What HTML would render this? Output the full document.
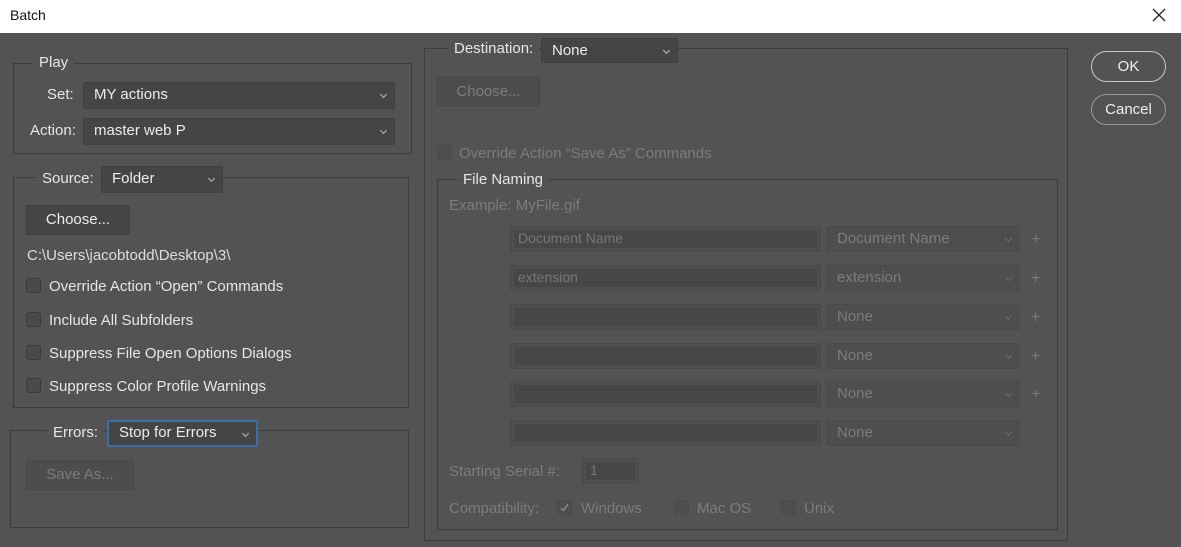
<!DOCTYPE html>
<html><head><meta charset="utf-8"><style>
*{box-sizing:border-box;margin:0;padding:0}
body{width:1181px;height:547px;background:#535353;font-family:"Liberation Sans",sans-serif;font-size:15px;color:#e6e6e6;position:relative;overflow:hidden}
.a{position:absolute;white-space:nowrap}
.title{left:0;top:0;width:1181px;height:33px;background:#fff;color:#111;font-size:14px}
.grp{position:absolute;border:1px solid #3c3c3c}
.leg{position:absolute;background:#535353;padding:0 6px;line-height:18px}
.dd{position:absolute;background:#454545;border:1px solid #3f3f3f;border-radius:2px;padding-left:10px;line-height:24px;color:#ececec}
.dd:after{content:"";position:absolute;right:8px;top:9px;width:4px;height:4px;border-right:1px solid #bbb;border-bottom:1px solid #bbb;transform:rotate(45deg)}
.btn{position:absolute;background:#454545;border:1px solid #3e3e3e;border-radius:2px;text-align:center;color:#eee}
.dis{color:#7c7c7c}
.btn.dis{background:#4d4d4d;border-color:#484848}
.cb{position:absolute;width:15px;height:15px;border:1px solid #3a3a3a;background:#4a4a4a;border-radius:3px}
.cb.d{background:#4e4e4e;border-color:#4a4a4a}
.tf{position:absolute;background:#4e4e4e;border:1px solid #4a4a4a;padding:3px}
.tf div{background:#474747;height:100%;color:#777;line-height:17px;padding-left:4px;font-size:14px}
.dd.d{background:#4e4e4e;border-color:#4a4a4a;color:#7c7c7c}
.dd.d:after{border-color:#6e6e6e}
.plus{position:absolute;color:#7a7a7a;font-size:16px}
.pill{position:absolute;border:1px solid #c8c8c8;border-radius:16px;text-align:center;color:#eee}
</style></head><body>
<div class="a title"><span class="a" style="left:10px;top:7px">Batch</span>
<svg class="a" style="left:1152px;top:8px" width="14" height="14"><path d="M1 1L13 13M13 1L1 13" stroke="#222" stroke-width="1.3"/></svg></div>

<div class="grp" style="left:13px;top:63px;width:399px;height:91px"></div>
<div class="leg a" style="left:33px;top:54px">Play</div>
<div class="a" style="left:47px;top:86px">Set:</div>
<div class="dd" style="left:83px;top:82px;width:312px;height:27px">MY actions</div>
<div class="a" style="left:30px;top:122px">Action:</div>
<div class="dd" style="left:83px;top:118px;width:312px;height:27px">master web P</div>

<div class="grp" style="left:13px;top:177px;width:396px;height:231px"></div>
<div class="leg a" style="left:36px;top:170px">Source:</div>
<div class="dd" style="left:101px;top:166px;width:122px;height:27px">Folder</div>
<div class="btn" style="left:26px;top:205px;width:104px;height:30px;line-height:28px">Choose...</div>
<div class="a" style="left:27px;top:247px;color:#ddd">C:\Users\jacobtodd\Desktop\3\</div>
<div class="cb" style="left:26px;top:278px"></div><div class="a" style="left:49px;top:278px">Override Action “Open” Commands</div>
<div class="cb" style="left:26px;top:312px"></div><div class="a" style="left:49px;top:312px">Include All Subfolders</div>
<div class="cb" style="left:26px;top:345px"></div><div class="a" style="left:49px;top:345px">Suppress File Open Options Dialogs</div>
<div class="cb" style="left:26px;top:378px"></div><div class="a" style="left:49px;top:378px">Suppress Color Profile Warnings</div>

<div class="grp" style="left:10px;top:430px;width:399px;height:98px"></div>
<div class="leg a" style="left:47px;top:424px">Errors:</div>
<div class="dd" style="left:107px;top:420px;width:151px;height:27px;border:2px solid #3b6ea8;line-height:22px">Stop for Errors</div>
<div class="btn dis" style="left:26px;top:460px;width:108px;height:30px;line-height:28px">Save As...</div>

<div class="grp" style="left:424px;top:48px;width:644px;height:493px"></div>
<div class="leg a" style="left:448px;top:40px">Destination:</div>
<div class="dd" style="left:541px;top:38px;width:137px;height:25px;line-height:23px">None</div>
<div class="btn dis" style="left:437px;top:77px;width:103px;height:29px;line-height:27px">Choose...</div>
<div class="cb d" style="left:437px;top:145px"></div><div class="a dis" style="left:459px;top:145px">Override Action “Save As” Commands</div>

<div class="grp" style="left:437px;top:179px;width:621px;height:351px"></div>
<div class="leg a" style="left:457px;top:171px">File Naming</div>
<div class="a dis" style="left:449px;top:197px">Example: MyFile.gif</div>

<div class="tf" style="left:510px;top:226px;width:311px;height:26px"><div>Document Name</div></div>
<div class="dd d" style="left:826px;top:226px;width:194px;height:26px">Document Name</div><div class="plus" style="left:1031px;top:231px">+</div>
<div class="tf" style="left:510px;top:265px;width:311px;height:26px"><div>extension</div></div>
<div class="dd d" style="left:826px;top:265px;width:194px;height:26px">extension</div><div class="plus" style="left:1031px;top:270px">+</div>
<div class="tf" style="left:510px;top:304px;width:311px;height:26px"><div></div></div>
<div class="dd d" style="left:826px;top:304px;width:194px;height:26px">None</div><div class="plus" style="left:1031px;top:309px">+</div>
<div class="tf" style="left:510px;top:343px;width:311px;height:26px"><div></div></div>
<div class="dd d" style="left:826px;top:343px;width:194px;height:26px">None</div><div class="plus" style="left:1031px;top:348px">+</div>
<div class="tf" style="left:510px;top:381px;width:311px;height:26px"><div></div></div>
<div class="dd d" style="left:826px;top:381px;width:194px;height:26px">None</div><div class="plus" style="left:1031px;top:386px">+</div>
<div class="tf" style="left:510px;top:420px;width:311px;height:26px"><div></div></div>
<div class="dd d" style="left:826px;top:420px;width:194px;height:26px">None</div>

<div class="a dis" style="left:449px;top:463px">Starting Serial #:</div>
<div class="tf" style="left:582px;top:458px;width:57px;height:26px"><div>1</div></div>
<div class="a dis" style="left:449px;top:500px">Compatibility:</div>
<div class="cb d" style="left:557px;top:500px"><svg class="a" style="left:1px;top:1px" width="11" height="11"><path d="M2 6L4.5 8.5L9 2" stroke="#8a8a8a" stroke-width="1.5" fill="none"/></svg></div>
<div class="a dis" style="left:581px;top:500px">Windows</div>
<div class="cb d" style="left:674px;top:500px"></div><div class="a dis" style="left:697px;top:500px">Mac OS</div>
<div class="cb d" style="left:781px;top:500px"></div><div class="a dis" style="left:804px;top:500px">Unix</div>

<div class="pill" style="left:1091px;top:51px;width:75px;height:31px;line-height:29px">OK</div>
<div class="pill" style="left:1091px;top:94px;width:75px;height:31px;line-height:29px;border-color:#9a9a9a">Cancel</div>
</body></html>
